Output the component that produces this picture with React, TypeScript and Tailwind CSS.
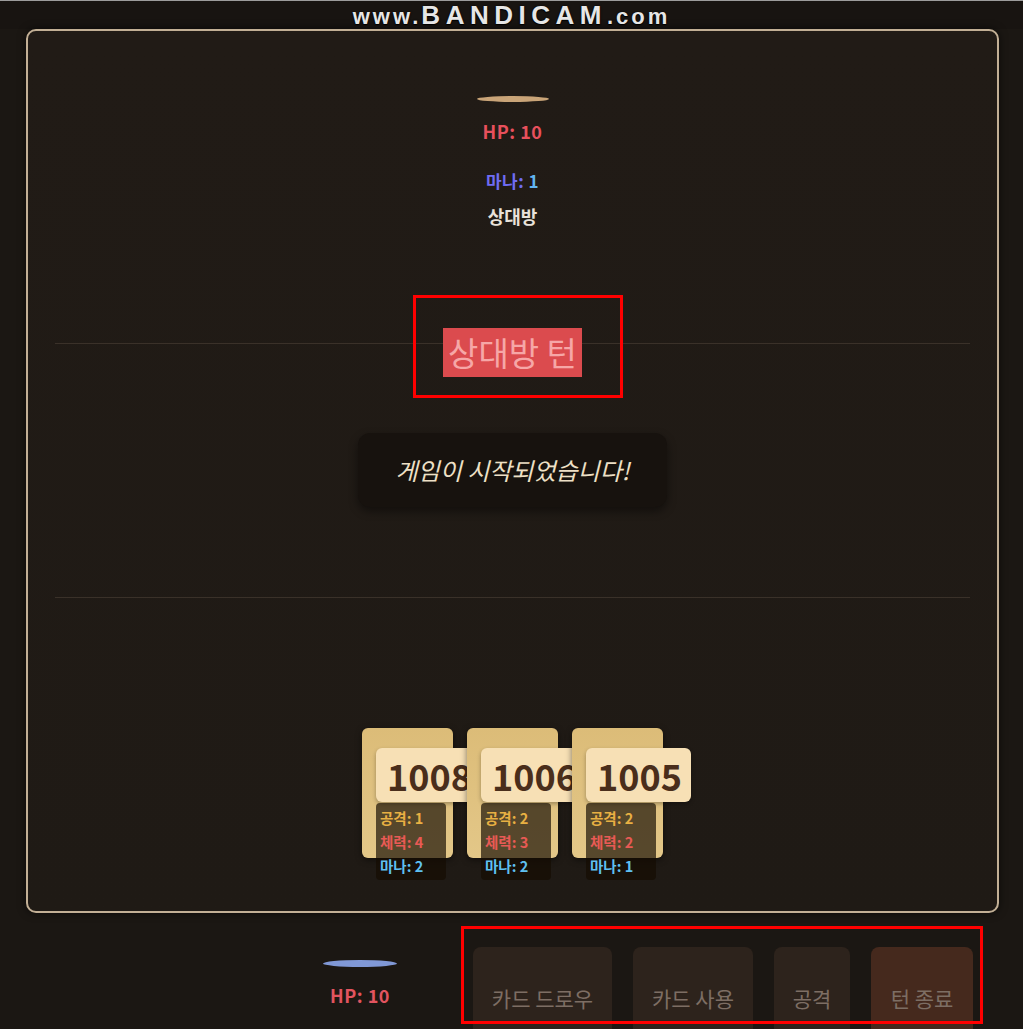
import React from "react";

const cards = [
  { id: 1008, atk: 1, hp: 4, mana: 2 },
  { id: 1006, atk: 2, hp: 3, mana: 2 },
  { id: 1005, atk: 2, hp: 2, mana: 1 },
];

const buttons = [
  { label: "카드 드로우", w: "w-[139px]", bg: "bg-[#2d231c]" },
  { label: "카드 사용", w: "w-[120px]", bg: "bg-[#2d231c]" },
  { label: "공격", w: "w-[76px]", bg: "bg-[#2d231c]" },
  { label: "턴 종료", w: "w-[102px]", bg: "bg-[#45291d]" },
];

export default function App() {
  return (
    <div className="relative h-[1029px] w-[1023px] overflow-hidden bg-[#1b1713] font-['Noto_Sans_CJK_KR','Noto_Sans',sans-serif]">
      {/* top bar / watermark */}
      <div className="flex h-[29px] items-center justify-center border-t border-[#9c9c9c] bg-[#181411]">
        <div className="flex items-baseline font-['Liberation_Sans',sans-serif] font-bold text-[#e6e6e6] [text-shadow:0_0_2px_#000,0_1px_1px_#000]">
          <span className="text-[22px] tracking-[3px]">www.</span>
          <span className="text-[26px] tracking-[5.5px]">BANDICAM</span>
          <span className="text-[22px] tracking-[3px]">.com</span>
        </div>
      </div>

      {/* main board */}
      <div className="ml-[26px] flex h-[884px] w-[973px] flex-col items-center rounded-[10px] border-2 border-[#c2af95] bg-gradient-to-b from-[#211b16] to-[#1f1a15] px-[27px] shadow-[0_0_8px_rgba(0,0,0,0.6)]">
        {/* opponent */}
        <div className="mt-[65px] h-[6px] w-[72px] rounded-[50%] bg-[#c9a478]" />
        <div className="mt-[16px] text-[18px] font-bold leading-[26px] tracking-[0.5px] text-[#e8505c]">HP: 10</div>
        <div className="mt-[24px] text-[17px] font-bold leading-[26px] tracking-[0.5px]">
          <span className="text-[#6f6cf2]">마나:</span> <span className="text-[#62b4f2]">1</span>
        </div>
        <div className="mt-[9px] text-[18px] font-bold leading-[26px] text-[#e9e2da]">상대방</div>

        {/* field */}
        <div className="mt-[114px] h-px w-full bg-[#3a3129]" />
        <div className="-mt-[16px] flex h-[49px] items-center bg-[#db4b4e] px-[5px] text-[33px] leading-none text-[#f6a7a7]">
          상대방 턴
        </div>
        <div className="mt-[56px] flex h-[74px] w-[309px] items-center justify-center rounded-[12px] bg-[#17120e] shadow-[0_4px_10px_rgba(0,0,0,0.45)]">
          <span className="text-[24px] italic text-[#eee0c6]">게임이 시작되었습니다!</span>
        </div>
        <div className="mt-[90px] h-px w-full bg-[#3a3129]" />

        {/* hand */}
        <div className="mt-[130px] flex gap-[14px]">
          {cards.map((c) => (
            <div
              key={c.id}
              className="relative h-[130px] w-[91px] rounded-[6px] bg-gradient-to-b from-[#dcbc78] to-[#e3c788] shadow-[0_2px_6px_rgba(0,0,0,0.5)]"
            >
              <div className="absolute left-[14px] top-[20px] h-[54px] w-[105px] rounded-[6px] bg-[#f7e0b5] pl-[11px] text-[36px] font-bold leading-[54px] text-[#4a2e1b] shadow-[0_2px_4px_rgba(0,0,0,0.3)]">
                {c.id}
              </div>
              <div className="absolute left-[14px] top-[75px] h-[77px] w-[70px] rounded-[4px] bg-[rgba(20,12,2,0.68)] pl-[4px] pt-[3px] text-[14.5px] font-bold leading-[24px]">
                <div className="text-[#e8b043]">공격: {c.atk}</div>
                <div className="text-[#e85a55]">체력: {c.hp}</div>
                <div className="text-[#5fc0f2]">마나: {c.mana}</div>
              </div>
            </div>
          ))}
        </div>
      </div>

      {/* player area */}
      <div className="flex">
        <div className="ml-[323px] flex w-[74px] flex-col items-center">
          <div className="mt-[47px] h-[7px] w-[74px] rounded-[50%] bg-[#8098d6]" />
          <div className="mt-[15px] whitespace-nowrap text-[18px] font-bold leading-[26px] tracking-[0.5px] text-[#e2545f]">HP: 10</div>
        </div>
        <div className="ml-[76px] mt-[34px] flex gap-[21px]">
          {buttons.map((b) => (
            <div
              key={b.label}
              className={`flex h-[104px] items-center justify-center rounded-[8px] ${b.w} ${b.bg} text-[21px] text-[#7d6e64]`}
            >
              {b.label}
            </div>
          ))}
        </div>
      </div>

      {/* annotation rectangles */}
      <div className="pointer-events-none absolute left-[413px] top-[295px] h-[103px] w-[210px] border-[3px] border-[#ff0000]" />
      <div className="pointer-events-none absolute left-[461px] top-[926px] h-[98px] w-[522px] border-[3px] border-[#ff0000]" />
    </div>
  );
}
